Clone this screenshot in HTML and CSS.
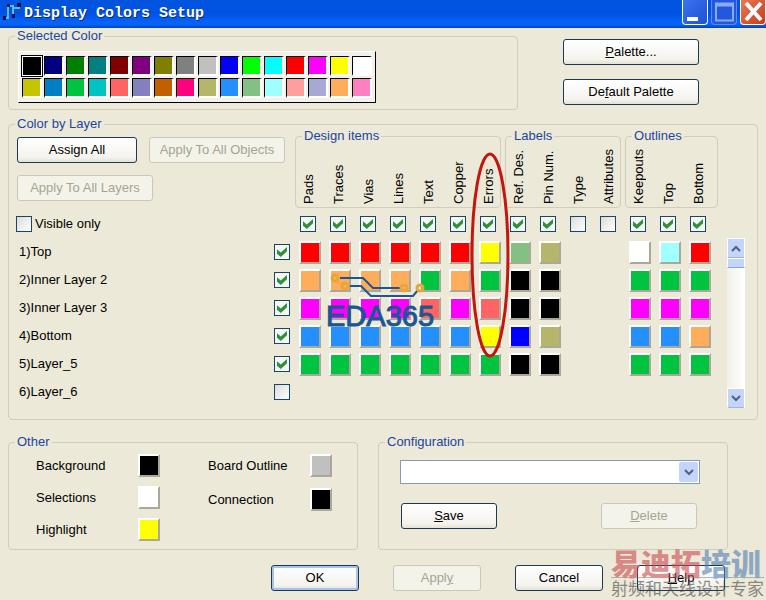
FILE: index.html
```
<!DOCTYPE html>
<html lang="en">
<head>
    <meta charset="UTF-8">
    <meta name="viewport" content="width=device-width, initial-scale=1.0">
    <title>Display Colors Setup</title>
    <link rel="stylesheet" href="styles.css">
</head>
<body>
    <header class="titlebar">
        <svg class="app-icon" width="20" height="22" viewBox="0 0 20 22" fill="none">
            <path d="M2 18H6V6H12M11 16V8H18" stroke="#59b8ff" stroke-width="2"/>
            <path d="M1 16h3v4H1zM5 4h3v3H5zM10 14h3v4h-3zM15 3h4v4h-4z" fill="#25104f"/>
        </svg>
        <h1>Display Colors Setup</h1>
        <div class="window-buttons">
            <button class="win-btn" aria-label="Minimize"><svg width="26" height="25"><rect x="4" y="17" width="11" height="4" fill="#fff"/></svg></button>
            <button class="win-btn win-max" aria-label="Maximize"><svg width="26" height="25"><path d="M4 3.500h17v17H4zM4 5.500h17" fill="none" stroke="#8da9f2" stroke-width="2"/></svg></button>
            <button class="win-btn win-close" aria-label="Close"><svg width="26" height="25"><path d="M5 3L20 20M20 3L5 20" stroke="#fff" stroke-width="4"/></svg></button>
        </div>
    </header>

    <main>
        <!-- Palette -->
        <div class="top-row">
            <fieldset class="group selected-color">
                <legend>Selected Color</legend>
                <div class="palette" id="palette"></div>
            </fieldset>
            <div class="palette-buttons">
                <button class="btn"><span><u>P</u>alette...</span></button>
                <button class="btn"><span>De<u>f</u>ault Palette</span></button>
            </div>
        </div>

        <!-- Layers -->
        <fieldset class="group layer-group">
            <legend>Color by Layer</legend>
            <div class="layer-body">
                <div class="layer-table-wrap">
                    <table class="layers">
                        <colgroup>
                            <col class="col-name">
                            <col class="col-check">
                            <col class="col-color" span="14">
                        </colgroup>
                        <thead>
                            <tr class="names-row">
                                <td colspan="2">
                                    <div class="assign">
                                        <button class="btn">Assign All</button>
                                        <button class="btn" disabled>Apply To All Objects</button>
                                        <button class="btn" disabled>Apply To All Layers</button>
                                    </div>
                                </td>
                                <td colspan="7">
                                    <fieldset class="group names">
                                        <legend>Design items</legend>
                                        <div class="names-list">
                                            <label for="col0">Pads</label>
                                            <label for="col1">Traces</label>
                                            <label for="col2">Vias</label>
                                            <label for="col3">Lines</label>
                                            <label for="col4">Text</label>
                                            <label for="col5">Copper</label>
                                            <label for="col6">Errors</label>
                                        </div>
                                    </fieldset>
                                </td>
                                <td colspan="4">
                                    <fieldset class="group names">
                                        <legend>Labels</legend>
                                        <div class="names-list">
                                            <label for="col7">Ref. Des.</label>
                                            <label for="col8">Pin Num.</label>
                                            <label for="col9">Type</label>
                                            <label for="col10">Attributes</label>
                                        </div>
                                    </fieldset>
                                </td>
                                <td colspan="3">
                                    <fieldset class="group names names-last">
                                        <legend>Outlines</legend>
                                        <div class="names-list">
                                            <label for="col11">Keepouts</label>
                                            <label for="col12">Top</label>
                                            <label for="col13">Bottom</label>
                                        </div>
                                    </fieldset>
                                </td>
                            </tr>
                            <tr id="column-checks">
                                <td class="name-cell"><div class="visible-only"><input type="checkbox" class="check" id="visible-only"><label for="visible-only">Visible only</label></div></td>
                                <td class="check-cell"></td>
                            </tr>
                        </thead>
                        <tbody id="layer-rows"></tbody>
                    </table>
                    <svg class="ring" width="40" height="206" viewBox="0 0 40 206" fill="none">
                        <ellipse cx="20" cy="103" rx="18" ry="101" stroke="#c3160c" stroke-width="3"/>
                    </svg>
                    <div class="eda-logo">
                        <svg width="110" height="28" viewBox="0 0 110 28" fill="none">
                            <path d="M14 7H37L47 17H74M24 15H35L45 25H87L92 19" stroke="#1b5795" stroke-width="2"/>
                            <g stroke="#e9a536" stroke-width="3">
                                <circle cx="9" cy="7" r="3"/>
                                <circle cx="19" cy="15" r="3"/>
                                <circle cx="78" cy="17" r="3"/>
                                <circle cx="94" cy="17" r="3"/>
                            </g>
                        </svg>
                        <span>EDA365</span>
                    </div>
                </div>
                <div class="scrollbar">
                    <button class="scroll-btn" aria-label="Scroll up"><svg width="10" height="7"><path d="M1 6L5 2L9 6" fill="none" stroke="#4d6185" stroke-width="2"/></svg></button>
                    <div class="scroll-thumb"></div>
                    <button class="scroll-btn scroll-down" aria-label="Scroll down"><svg width="10" height="7"><path d="M1 1L5 5L9 1" fill="none" stroke="#4d6185" stroke-width="2"/></svg></button>
                </div>
            </div>
        </fieldset>

        <div class="bottom-row">
            <fieldset class="group other">
                <legend>Other</legend>
                <div class="other-cols">
                    <div class="other-col">
                        <div class="other-item"><label for="background">Background</label><button id="background" class="swatch black"></button></div>
                        <div class="other-item"><label for="selections">Selections</label><button id="selections" class="swatch white"></button></div>
                        <div class="other-item"><label for="highlight">Highlight</label><button id="highlight" class="swatch yellow"></button></div>
                    </div>
                    <div class="other-col other-col-wide">
                        <div class="other-item"><label for="board">Board Outline</label><button id="board" class="swatch silver"></button></div>
                        <div class="other-item"><label for="connection">Connection</label><button id="connection" class="swatch black"></button></div>
                    </div>
                </div>
            </fieldset>

            <fieldset class="group config">
                <legend>Configuration</legend>
                <div class="combo">
                    <select aria-label="Configuration"><option></option></select>
                    <span class="combo-arrow"><svg width="10" height="7"><path d="M1 1L5 5L9 1" fill="none" stroke="#4d6185" stroke-width="2"/></svg></span>
                </div>
                <div class="config-buttons">
                    <button class="btn"><span><u>S</u>ave</span></button>
                    <button class="btn" disabled><span><u>D</u>elete</span></button>
                </div>
            </fieldset>
        </div>

        <footer class="actions">
            <button class="btn btn-default">OK</button>
            <button class="btn" disabled><span>Appl<u>y</u></span></button>
            <button class="btn">Cancel</button>
            <button class="btn"><span><u>H</u>elp</span></button>
            <div class="watermark">
                <div class="mark-name"><span>易迪拓</span>培训</div>
                <div class="mark-line">射频和天线设计专家</div>
            </div>
        </footer>
    </main>

    <script src="script.js"></script>
</body>
</html>
```
FILE: styles.css
```
* { box-sizing: border-box; }
body { margin: 0; background: #ece9d8; color: #000; font: 13px/16px "Liberation Sans", Arial, sans-serif; }
button, select { font: inherit; color: inherit; }
main { padding: 4px 8px 8px; }

/* Title bar */
.titlebar { display: flex; height: 28px; background: linear-gradient(#0054dc 0, #0053e2 50%, #0563fa 78%, #0563fa 88%, #0441b4 100%); }
.app-icon { margin: 0 2px; }
.titlebar h1 { margin: 0; font: bold 15px/27px "Liberation Mono", "Courier New", monospace; color: #fff; text-shadow: 1px 1px #0a2a80; }
.window-buttons { display: flex; gap: 3px; margin-left: auto; }
.win-btn { width: 26px; height: 25px; padding: 0; border: 1px solid #fff; border-top: 0; border-radius: 0 0 4px 4px; background: linear-gradient(135deg, #3a74f0, #1f50d4); overflow: hidden; }
.win-btn svg { display: block; }
.win-max { border-color: #5d8af0; background: #2158dd; }
.win-close { background: linear-gradient(135deg, #e87858, #c83c18); }

/* Group boxes */
.group { min-width: 0; margin: 0; padding: 0; border: 1px solid #d0cdbb; border-radius: 4px; }
.group legend { margin-left: 6px; padding: 0 2px; line-height: 8px; color: #1c459c; }

/* Buttons */
.btn { height: 26px; padding: 0; border: 1px solid #1a3a56; border-radius: 3px; background: linear-gradient(#fff, #f4f3ee 80%, #e4e1d6); line-height: 16px; white-space: nowrap; }
.btn:disabled { border-color: #cbc8ba; background: #f4f3e9; color: #a5a494; }
.btn-default { box-shadow: inset 0 0 0 2px #a9c3ee; }

/* Check boxes */
.check { appearance: none; display: block; width: 16px; height: 16px; margin: 0; border: 1px solid #1c4468; background: linear-gradient(135deg, #dcdcd8, #fff); }
.check:checked { background: #f4f8f2; }
.check:checked::before { content: ""; display: block; width: 10px; height: 10px; margin: 2px; background: #2f8f3c; clip-path: polygon(0 22%, 38% 54%, 100% 0, 100% 42%, 38% 100%, 0 68%); }

/* Color swatches */
.swatch { display: block; width: 22px; height: 23px; padding: 0; border: 2px solid; border-color: #fff #aca899 #aca899 #fff; }
.black { background: #000; }
.white { background: #fff; }
.yellow { background: #ff0; }
.silver { background: #c0c0c0; }

/* Palette */
.top-row { display: flex; gap: 45px; }
.selected-color { flex: 0 1 510px; height: 78px; }
.palette { display: grid; grid-template-columns: repeat(16, 20px); gap: 2px; width: 358px; margin: 11px 0 0 9px; padding: 4px 3px; border: 1px solid; border-color: #fff #000 #000 #fff; background: #f3f1e9; }
.palette button { width: 20px; height: 20px; padding: 0; border: 1px solid; border-color: #000 #fff #fff #000; border-right-width: 2px; border-bottom-width: 2px; }
.palette .selected { outline: 1px solid #000; border: 1px solid #fff; }
.palette-buttons { display: flex; flex-direction: column; gap: 14px; width: 136px; padding-top: 7px; }

/* Layer table */
.layer-group { margin-top: 10px; padding-bottom: 11px; }
.layer-body { display: flex; justify-content: space-between; padding: 0 12px 0 7px; }
.layer-table-wrap { position: relative; }
.layers { width: 699px; border-collapse: collapse; table-layout: fixed; }
.col-name { width: 253px; }
.col-check { width: 26px; }
.col-color { width: 30px; }
.layers td { height: 28px; padding: 0 0 0 4px; }
.layers .names-row td { height: 82px; padding: 0; vertical-align: top; }
.layers .name-cell { padding: 0 0 0 3px; }
.layers .check-cell { padding: 0 0 0 5px; }
.layers thead .name-cell { padding: 0; }
.assign { display: flex; flex-wrap: wrap; gap: 12px; padding: 9px 0 0 1px; }
.assign .btn { width: 136px; }
.assign .btn:first-child { width: 120px; }
.names { margin: 4px 4px 0 0; padding-bottom: 3px; }
.names-last { margin-right: -3px; }
.names-list { display: flex; gap: 4px; }
.names-list label { width: 26px; height: 64px; line-height: 26px; writing-mode: vertical-rl; transform: rotate(180deg); white-space: nowrap; }
.visible-only { display: flex; gap: 3px; }
.layers thead .check { margin-left: 1px; }
.layers thead .visible-only .check { margin-left: 0; }

/* Marks over the table */
.ring { position: absolute; left: 454px; top: 24px; pointer-events: none; }
.eda-logo { position: absolute; left: 310px; top: 143px; color: #1b5795; font-size: 29px; line-height: 34px; pointer-events: none; }
.eda-logo svg { display: block; }
.eda-logo span { display: block; -webkit-text-stroke: 1px #1b5795; }

/* Scroll bar */
.scrollbar { display: flex; flex-direction: column; width: 18px; margin: 110px 0 0; height: 170px; background: linear-gradient(90deg, #f1f0ea, #fff); }
.scroll-btn { display: flex; align-items: center; justify-content: center; height: 20px; padding: 0; border: 1px solid #fff; border-bottom-color: #9ab4e8; border-radius: 2px; background: #c4d4fb; }
.scroll-thumb { height: 10px; border: 1px solid #fff; border-bottom-color: #86a4e0; background: #c4d4fb; }
.scroll-down { margin-top: auto; }

/* Other and configuration */
.bottom-row { display: flex; gap: 20px; margin-top: 18px; }
.bottom-row .group { flex: 0 1 350px; height: 112px; }
.other-cols { display: flex; gap: 48px; padding: 8px 0 0 27px; }
.other-col { display: flex; flex-direction: column; gap: 9px; }
.other-col-wide { gap: 11px; }
.other-item { display: flex; align-items: center; }
.other-item label { width: 102px; }
.combo { position: relative; margin: 14px 27px 0 21px; }
.combo select { appearance: none; display: block; width: 100%; height: 24px; border: 1px solid #7f9db9; border-radius: 0; background: #fff; }
.combo-arrow { position: absolute; top: 2px; right: 2px; display: flex; align-items: center; justify-content: center; width: 19px; height: 20px; border-radius: 2px; background: #c4d4fb; pointer-events: none; }
.config-buttons { display: flex; justify-content: space-between; margin: 19px 30px 0 22px; }
.config-buttons .btn { width: 96px; }

/* Bottom buttons */
.actions { position: relative; display: flex; justify-content: flex-end; gap: 34px; padding: 15px 33px 0 0; }
.actions .btn { width: 88px; }
.watermark { position: absolute; right: -6px; top: -3px; width: 153px; opacity: 0.6; color: #444; font-family: "Noto Sans CJK SC", sans-serif; pointer-events: none; white-space: nowrap; }
.mark-name { border-bottom: 1px solid #8a8a8a; color: #4f7fb5; font-size: 30px; font-weight: 900; line-height: 30px; }
.mark-name span { color: #cc4a50; }
.mark-line { font-size: 17px; line-height: 20px; }
```
FILE: script.js
```
const red = "#ff0000", yellow = "#ffff00", orange = "#ffad5b", green = "#00c440";
const magenta = "#ff00ff", salmon = "#ff6464", blue = "#2490ff", black = "#000000";
const khaki = "#b5b56b", white = "#ffffff";

const palette = [
    "#000000", "#000080", "#008000", "#008080", "#800000", "#800080", "#808000", "#808080",
    "#c0c0c0", "#0000ff", "#00ff00", "#00ffff", "#ff0000", "#ff00ff", "#ffff00", "#ffffff",
    "#c4c400", "#0080c4", "#00c440", "#00c4c4", "#ff6464", "#8480c0", "#c06000", "#ff0080",
    "#b5b56b", "#2490ff", "#84c084", "#a0ffff", "#ff9e9e", "#a8a8d4", "#ffad5b", "#ff80c0"
];

const layers = [
    ["1)Top", red, red, red, red, red, red, yellow, "#84c084", khaki, "", "", white, "#a0ffff", red],
    ["2)Inner Layer 2", orange, orange, orange, orange, green, orange, green, black, black, "", "", green, green, green],
    ["3)Inner Layer 3", magenta, magenta, magenta, magenta, salmon, magenta, salmon, black, black, "", "", magenta, magenta, magenta],
    ["4)Bottom", blue, blue, blue, blue, blue, blue, yellow, "#0000ff", khaki, "", "", blue, blue, orange],
    ["5)Layer_5", green, green, green, green, green, green, green, black, black, "", "", green, green, green],
    ["6)Layer_6"]
];

function swatch(color, cls) {
    return `<button class="${cls}" style="background-color:${color}" aria-label="${color}"></button>`;
}

document.getElementById("palette").innerHTML =
    palette.map((color, i) => swatch(color, i === 0 ? "selected" : "")).join("");

// Column check boxes, Type and Attributes are off
let checks = "";
for (let i = 0; i < 14; i++) {
    const on = i === 9 || i === 10 ? "" : "checked";
    checks += `<td><input type="checkbox" class="check" id="col${i}" ${on}></td>`;
}
document.getElementById("column-checks").insertAdjacentHTML("beforeend", checks);

document.getElementById("layer-rows").innerHTML = layers.map(([name, ...colors], i) => {
    let cells = "";
    for (let c = 0; c < 14; c++) {
        cells += `<td>${colors[c] ? swatch(colors[c], "swatch") : ""}</td>`;
    }
    return `<tr>
        <td class="name-cell"><label for="layer${i}">${name}</label></td>
        <td class="check-cell"><input type="checkbox" class="check" id="layer${i}" ${colors.length ? "checked" : ""}></td>
        ${cells}
    </tr>`;
}).join("");
```
